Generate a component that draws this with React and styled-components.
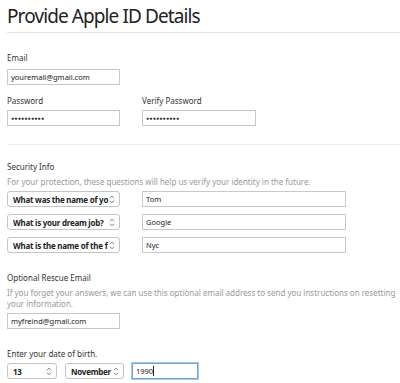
import React from 'react';
import styled, { createGlobalStyle } from 'styled-components';

const GlobalStyle = createGlobalStyle`
  body {
    margin: 0;
    background: #fff;
    font-family: "Noto Sans", "Open Sans", sans-serif;
    color: #333;
  }
`;

const Page = styled.div`
  width: 400px;
  height: 383px;
  overflow: hidden;
  padding: 0 0 0 7px;
  box-sizing: border-box;
`;

const Title = styled.h1`
  margin: 0;
  padding-top: 2px;
  height: 30px;
  box-sizing: content-box;
  font-size: 19px;
  letter-spacing: -0.9px;
  font-weight: 400;
  color: #222;
  line-height: 28px;
  border-bottom: 1px solid #e4e4e4;
`;

const Section = styled.div`
  padding-top: ${(p) => p.top || 0}px;
`;

const Divider = styled.div`
  height: 1px;
  background: #ececec;
  margin-top: ${(p) => p.top || 0}px;
`;

const Label = styled.div`
  font-size: 8px;
  line-height: 12px;
  color: #333;
  margin-bottom: ${(p) => p.gap ?? 5}px;
`;

const Help = styled.div`
  font-size: 8px;
  line-height: 11px;
  color: #999;
  margin-bottom: 4px;
  white-space: nowrap;
`;

const Row = styled.div`
  display: flex;
  gap: ${(p) => p.gap ?? 22}px;
  margin-top: ${(p) => p.mt ?? 0}px;
  margin-bottom: ${(p) => p.mb ?? 0}px;
`;

const Field = styled.div`
  display: flex;
  flex-direction: column;
`;

const Input = styled.div`
  box-sizing: border-box;
  width: ${(p) => p.w}px;
  height: 16px;
  border: 1px solid ${(p) => (p.focus ? '#6ea3d8' : '#c8c8c8')};
  box-shadow: ${(p) => (p.focus ? '0 0 0 1px #a9c9ea' : 'none')};
  font-size: 7.5px;
  line-height: 14px;
  padding-left: 3px;
  color: #222;
  display: flex;
  align-items: center;
`;

const Dots = styled.span`
  font-size: 5px;
  letter-spacing: 0.3px;
`;

const Caret = styled.span`
  display: inline-block;
  width: 1px;
  height: 10px;
  background: #222;
`;

const Select = styled.div`
  box-sizing: border-box;
  width: ${(p) => p.w}px;
  height: 16px;
  border: 1px solid #c4c4c4;
  border-radius: 3px;
  font-size: 8px;
  font-weight: 700;
  letter-spacing: -0.25px;
  color: #222;
  display: flex;
  align-items: center;
  padding: 0 4px 0 5px;
  white-space: nowrap;
`;

const SelectText = styled.span`
  flex: 1;
  overflow: hidden;
`;

const Chevrons = () => (
  <svg width="6" height="9" viewBox="0 0 6 9" fill="none" stroke="#666" strokeWidth="0.9">
    <path d="M1 3.2 L3 1.2 L5 3.2" />
    <path d="M1 5.8 L3 7.8 L5 5.8" />
  </svg>
);

const questions = [
  { q: 'What was the name of yo', a: 'Tom' },
  { q: 'What is your dream job?', a: 'Google' },
  { q: 'What is the name of the f', a: 'Nyc' },
];

export default function App() {
  return (
    <Page>
      <GlobalStyle />
      <Title>Provide Apple ID Details</Title>

      <Section top={19}>
        <Label>Email</Label>
        <Input w={113}>youremail@gmail.com</Input>
      </Section>

      <Row gap={22} mt={10}>
        <Field>
          <Label gap={3}>Password</Label>
          <Input w={113}><Dots>●●●●●●●●●●</Dots></Input>
        </Field>
        <Field>
          <Label gap={3}>Verify Password</Label>
          <Input w={114}><Dots>●●●●●●●●●●</Dots></Input>
        </Field>
      </Row>

      <Divider top={18} />

      <Section top={16}>
        <Label gap={3}>Security Info</Label>
        <Help>For your protection, these questions will help us verify your identity in the future.</Help>
        {questions.map((item) => (
          <Row key={item.q} gap={22} mb={7}>
            <Select w={113}>
              <SelectText>{item.q}</SelectText>
              <Chevrons />
            </Select>
            <Input w={204}>{item.a}</Input>
          </Row>
        ))}
      </Section>

      <Section top={12}>
        <Label gap={3}>Optional Rescue Email</Label>
        <Help>
          If you forget your answers, we can use this optional email address to send you instructions on resetting
          <br />
          your information.
        </Help>
        <Input w={113}>myfreind@gmail.com</Input>
      </Section>

      <Section top={19}>
        <Label gap={3}>Enter your date of birth.</Label>
        <Row gap={8}>
          <Select w={50}>
            <SelectText>13</SelectText>
            <Chevrons />
          </Select>
          <Select w={59}>
            <SelectText>November</SelectText>
            <Chevrons />
          </Select>
          <Input w={66} focus>1990<Caret /></Input>
        </Row>
      </Section>
    </Page>
  );
}
